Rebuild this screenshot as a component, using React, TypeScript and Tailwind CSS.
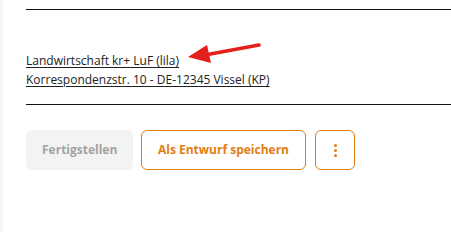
import React from 'react';

export default function App() {
  return (
    <div className="min-h-[232px] bg-white border-l-[3px] border-[#f5f5f5] pl-[23px] pt-[9px] font-['Open_Sans',sans-serif]">
      <div className="border-t border-[#111]" />
      <div className="relative mt-[41px] text-[12px] leading-[19px] text-[#222]">
        <a className="block w-fit underline underline-offset-2" href="#">Landwirtschaft kr+ LuF (lila)</a>
        <a className="block w-fit underline underline-offset-2" href="#">Korrespondenzstr. 10 - DE-12345 Vissel (KP)</a>
        {/* Hinweispfeil */}
        <svg className="absolute left-[161px] top-[-10px]" width="75" height="28" viewBox="0 0 75 28">
          <line x1="72" y1="4" x2="18" y2="14" stroke="#e3201b" strokeWidth="3.6" strokeLinecap="round" />
          <polygon points="1,16 20,4 24,22" fill="#e3201b" />
        </svg>
      </div>
      <div className="mt-[15px] border-t border-[#111]" />
      <div className="mt-[25px] flex items-center text-[12px] font-bold">
        <button className="h-10 px-4 rounded-md bg-[#f3f3f3] text-[#a3a3a3] w-[107px]">Fertigstellen</button>
        <button className="ml-2 h-10 w-[165px] rounded-md border border-[#e27d14] text-[#e27d14]">Als Entwurf speichern</button>
        <button className="ml-[9px] h-10 w-10 rounded-md border border-[#e27d14] flex flex-col items-center justify-center gap-[2px]">
          <span className="block w-[3px] h-[3px] rounded-full bg-[#e27d14]" />
          <span className="block w-[3px] h-[3px] rounded-full bg-[#e27d14]" />
          <span className="block w-[3px] h-[3px] rounded-full bg-[#e27d14]" />
        </button>
      </div>
    </div>
  );
}
